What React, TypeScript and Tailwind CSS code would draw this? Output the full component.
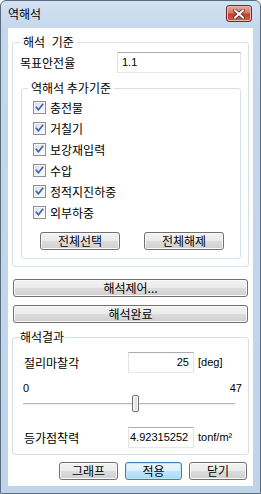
import React from "react";

const KR = "font-['Noto_Sans_CJK_KR','Noto_Sans',sans-serif]";
const LAT = "font-['Liberation_Sans','DejaVu_Sans',sans-serif]";

function WinButton({
  children,
  className = "",
  def = false,
}: {
  children: React.ReactNode;
  className?: string;
  def?: boolean;
}) {
  return (
    <div
      className={`flex items-center justify-center h-[18px] rounded-[3px] border text-[12px] leading-none text-black ${KR} ${
        def
          ? "border-[#3c7fb1] bg-[linear-gradient(#eaf6fd,#d9f0fc_50%,#bee6fd_50%,#a7d9f5)] shadow-[inset_0_0_0_1px_#c4e5f6]"
          : "border-[#707070] bg-[linear-gradient(#f2f2f2,#ebebeb_50%,#dddddd_50%,#cfcfcf)] shadow-[inset_0_0_0_1px_#fbfbfb]"
      } ${className}`}
    >
      {children}
    </div>
  );
}

function CheckBox() {
  return (
    <svg width="13" height="13" viewBox="0 0 13 13" className="shrink-0">
      <defs>
        <linearGradient id="cbg" x1="0" y1="0" x2="1" y2="1">
          <stop offset="0" stopColor="#dcdfe3" />
          <stop offset="1" stopColor="#fbfbfb" />
        </linearGradient>
      </defs>
      <rect x="0.5" y="0.5" width="12" height="12" fill="#f6f6f6" stroke="#8f8f8f" />
      <rect x="2" y="2" width="9" height="9" fill="url(#cbg)" />
      <path d="M3.3 6.3 L5.4 8.8 L9.7 3.4" stroke="#3a60b4" strokeWidth="1.6" fill="none" strokeLinecap="square" />
    </svg>
  );
}

function Check({ label }: { label: string }) {
  return (
    <div className="flex items-center h-[21px] gap-[4px]">
      <CheckBox />
      <span className={`text-[12px] leading-none text-black ${KR}`}>{label}</span>
    </div>
  );
}

function Field({ value, className = "" }: { value: string; className?: string }) {
  return (
    <div
      className={`flex items-center h-[21px] bg-white border border-[#e2e3ea] border-t-[#abadb3] border-b-[#e3e9ef] text-[11px] text-black ${LAT} ${className}`}
    >
      {value}
    </div>
  );
}

export default function App() {
  return (
    <div className="w-[261px] h-[494px] flex flex-col rounded-t-[6px] border border-[#5b6c80] bg-[linear-gradient(#d3e2f3,#c4d7ed_28px,#bfd3ea)] px-[7px] pb-[7px]">
      {/* Title bar */}
      <div className="flex items-center justify-between h-[27px] pb-[2px]">
        <span className={`text-[12px] leading-none text-black ${KR}`}>역해석</span>
        <div className="mr-[1px] w-[26px] h-[17px] rounded-[3px] border border-[#6e2d27] bg-[linear-gradient(#e9a99f,#d57a6c_45%,#c2402d_55%,#d2603f)] shadow-[inset_0_0_0_1px_#efb9ae] flex items-center justify-center">
          <svg width="12" height="10" viewBox="0 0 12 10">
            <path d="M2 1.5 L10 8.5 M10 1.5 L2 8.5" stroke="#5a2a24" strokeWidth="3.6" strokeLinecap="square" />
            <path d="M2 1.5 L10 8.5 M10 1.5 L2 8.5" stroke="#ffffff" strokeWidth="2" strokeLinecap="square" />
          </svg>
        </div>
      </div>

      {/* Client area */}
      <div className="flex-1 bg-white flex flex-col pl-[4px] pr-[4px]">
        {/* Group 1 */}
        <div className="relative mt-[14px] w-[237px] border border-[#d5dfe5] rounded-[3px] pt-[9px] pl-[7px] pr-[7px] pb-[7px] flex flex-col">
          <span className={`absolute -top-[8px] left-[7px] bg-white px-[3px] text-[12px] leading-[14px] text-black [word-spacing:4px] ${KR}`}>
            해석 기준
          </span>
          <div className="flex items-center h-[21px]">
            <span className={`w-[97px] text-[12px] leading-none text-black ${KR}`}>목표안전율</span>
            <Field value="1.1" className="w-[124px] pl-[4px]" />
          </div>

          {/* Inner group */}
          <div className="relative mt-[15px] ml-[1px] w-[220px] border border-[#d5dfe5] rounded-[3px] pt-[8px] pl-[11px] pb-[8px] flex flex-col">
            <span className={`absolute -top-[8px] left-[6px] bg-white px-[3px] text-[12px] leading-[14px] text-black ${KR}`}>
              역해석 추가기준
            </span>
            <Check label="충전물" />
            <Check label="거칠기" />
            <Check label="보강재입력" />
            <Check label="수압" />
            <Check label="정적지진하중" />
            <Check label="외부하중" />
            <div className="flex mt-[9px] ml-[7px] gap-[24px]">
              <WinButton className="w-[80px]">전체선택</WinButton>
              <WinButton className="w-[80px]">전체해제</WinButton>
            </div>
          </div>
        </div>

        <WinButton className="mt-[12px] ml-[1px] w-[235px]">해석제어...</WinButton>
        <WinButton className="mt-[8px] ml-[1px] w-[235px]">해석완료</WinButton>

        {/* Group 3 */}
        <div className="relative mt-[14px] w-[237px] border border-[#d5dfe5] rounded-[3px] pt-[14px] pl-[11px] pr-[6px] pb-[6px] flex flex-col">
          <span className={`absolute -top-[8px] left-[7px] bg-white pr-[1px] text-[12px] leading-[14px] text-black ${KR}`}>
            해석결과
          </span>
          <div className="flex items-center h-[21px]">
            <span className={`w-[104px] text-[12px] leading-none text-black ${KR}`}>절리마찰각</span>
            <Field value="25" className="w-[66px] justify-end pr-[4px]" />
            <span className={`ml-[4px] text-[11px] text-black ${LAT}`}>[deg]</span>
          </div>
          <div className={`flex justify-between mt-[9px] -ml-[1px] h-[13px] items-center text-[11px] text-black ${LAT}`}>
            <span>0</span>
            <span>47</span>
          </div>
          <div className="relative h-[17px] -ml-[1px] mr-[7px]">
            <div className="absolute left-0 right-0 top-[8px] h-[2px] border-t border-[#b7b7b7] border-b border-b-[#eeeeee]" />
            <div className="absolute left-[109px] top-0 w-[7px] h-[17px] rounded-[2px] border border-[#707070] bg-[linear-gradient(90deg,#f3f3f3,#e6e6e6_50%,#d6d6d6)] shadow-[inset_0_0_0_1px_#fafafa]" />
          </div>
          <div className="flex items-center h-[21px] mt-[15px]">
            <span className={`w-[104px] text-[12px] leading-none text-black ${KR}`}>등가점착력</span>
            <Field value="4.92315252" className="w-[66px] pl-[1px]" />
            <span className={`ml-[4px] text-[11px] text-black ${LAT}`}>tonf/m²</span>
          </div>
        </div>

        <div className="flex justify-end mt-[7px] pr-[2px] gap-[7px]">
          <WinButton className="w-[59px]">그래프</WinButton>
          <WinButton className="w-[57px]" def>
            적용
          </WinButton>
          <WinButton className="w-[58px]">닫기</WinButton>
        </div>
      </div>
    </div>
  );
}
